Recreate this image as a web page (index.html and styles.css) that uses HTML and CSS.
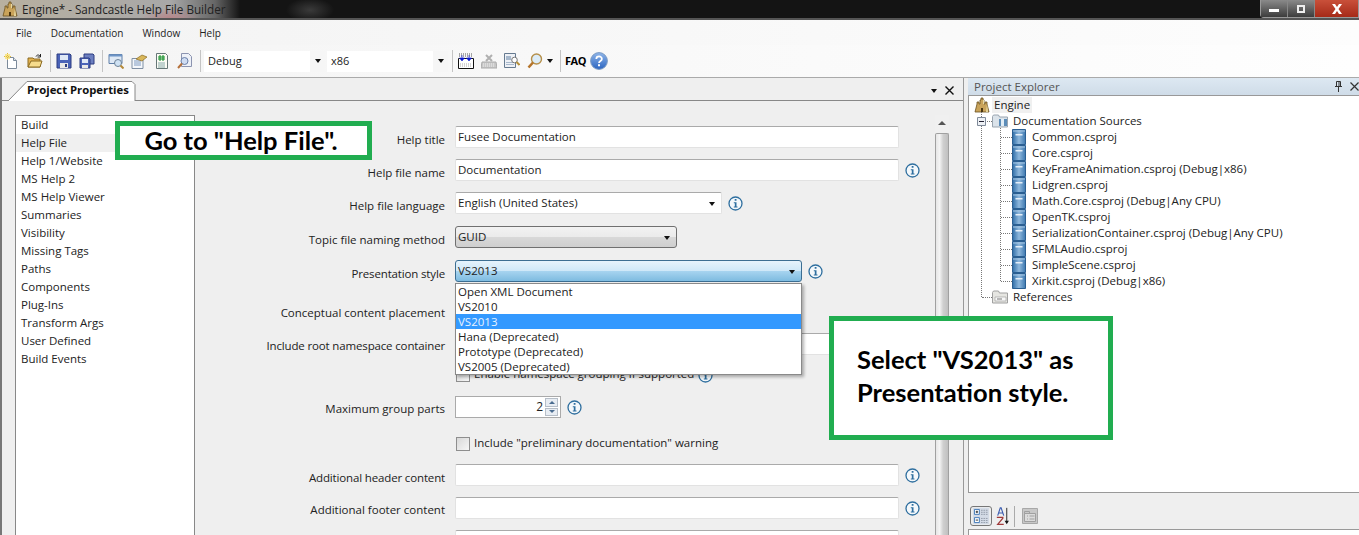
FILE: index.html
```html
<!DOCTYPE html>
<html lang="en">
<head>
    <meta charset="UTF-8">
    <title>Engine* - Sandcastle Help File Builder</title>
    <link rel="stylesheet" href="styles.css">
</head>
<body>
<svg class="sprite" xmlns="http://www.w3.org/2000/svg">
    <defs>
        <linearGradient id="blueSq" x1="0" x2="1" y1="0" y2="0"><stop offset="0" stop-color="#2f6ea8"/><stop offset=".5" stop-color="#8fb8dc"/><stop offset="1" stop-color="#3d78b0"/></linearGradient>
        <linearGradient id="helpBall" x1="0" x2="0" y1="0" y2="1"><stop offset="0" stop-color="#8fb6ea"/><stop offset="1" stop-color="#2a64c0"/></linearGradient>
    </defs>
    <symbol id="i-castle" viewBox="0 0 16 16"><path d="M1 15 3 7V5h2v2h1V3h1V1h2v2h1v4h1V5h2v2l2 8z" fill="#c9a35a" stroke="#6b5220" stroke-width=".8"/><path d="M7 15v-4h2v4z" fill="#4a3510"/><path d="M9 3h1v4H9zM13 7l1 8h-2z" fill="#e9d9a0"/></symbol>
    <symbol id="i-new" viewBox="0 0 16 16"><path d="M3.5 4.5h6l3 3v8h-9z" fill="#fff" stroke="#7c8a9a"/><path d="M9.5 4.5v3h3" fill="#dfe6ee" stroke="#7c8a9a"/><path d="M1 1h5v5H1z" fill="#f6e27a" opacity=".85"/><path d="M3.5 0v7M0 3.5h7" stroke="#e3b93a" stroke-dasharray="1 1"/></symbol>
    <symbol id="i-open" viewBox="0 0 16 16"><path d="M1 14V5h5l1 1h6v8z" fill="#e4b24e" stroke="#8a6a22"/><path d="M1 14l3-6h11l-2 6z" fill="#f7dc8c" stroke="#8a6a22"/><path d="M9 3.5c1-2 3-2 4.500 0M13.500 1v3h-3" fill="none" stroke="#222"/></symbol>
    <symbol id="i-save" viewBox="0 0 16 16"><path d="M1 1h13l1 1v13H1z" fill="#4a63b8" stroke="#2c3d80"/><path d="M4 2h8v5H4z" fill="#dfe8f6"/><path d="M4 10h8v5H4z" fill="#e8e8e8"/><path d="M9 11h2v3H9z" fill="#2c3d80"/></symbol>
    <symbol id="i-saveall" viewBox="0 0 16 16"><path d="M5 1h9l1 1v9H5z" fill="#6c7fc0" stroke="#2c3d80"/><path d="M1 5h9l1 1v9H1z" fill="#4a63b8" stroke="#2c3d80"/><path d="M3 6h6v4H3z" fill="#dfe8f6"/><path d="M3 12h6v3H3z" fill="#e8e8e8"/></symbol>
    <symbol id="i-window" viewBox="0 0 16 16"><path d="M1 1.500h13v9H1z" fill="#dfe9f5" stroke="#5f7fa8"/><path d="M1 1.500h13v2H1z" fill="#6d94c6"/><circle cx="10" cy="10" r="3.500" fill="#cfe2f4" stroke="#6d8297"/><path d="M12.500 12.500l3 3" stroke="#b58a3a" stroke-width="2"/></symbol>
    <symbol id="i-package" viewBox="0 0 16 16"><path d="M1 5.500h11v10H1z" fill="#f4f7fb" stroke="#7f8fa3"/><path d="M3 8h7M3 10h7M3 12h7" stroke="#7f9ac0"/><path d="M5 6l6-4 5 2-5 4z" fill="#d9b75a" stroke="#8a6a22" stroke-width=".7"/></symbol>
    <symbol id="i-sharp" viewBox="0 0 16 16"><path d="M2.500 .5h9l2 2v13h-11z" fill="#fbfbf4" stroke="#677"/><path d="M4 10h7M4 12h7M4 14h7" stroke="#8aa"/><path d="M6 2v6M9 2v6M4 4h7M4 6h7" stroke="#0a8a20"/></symbol>
    <symbol id="i-docfind" viewBox="0 0 16 16"><path d="M4.500 .5h7l3 3v10h-10z" fill="#eef1f8" stroke="#8c94b0"/><circle cx="7.500" cy="8" r="3.500" fill="#cfdcf2" stroke="#6a7fa8"/><path d="M5 10.500L1 15" stroke="#b5703a" stroke-width="2"/></symbol>
    <symbol id="i-toc" viewBox="0 0 16 16"><path d="M.5 5.500h15v10H.5z" fill="#fff" stroke="#111"/><path d="M1 1h14M1 3h14" stroke="#555" stroke-dasharray="1 1"/><path d="M4 2v5M1.500 5l2.500 3 2.500-3zM11 2v5M8.500 5l2.500 3 2.500-3z" fill="#0a1ad0" stroke="#0a1ad0" stroke-width=".6"/><path d="M2 11h12M2 13h12" stroke="#aaa" stroke-dasharray="1 1"/></symbol>
    <symbol id="i-keys" viewBox="0 0 16 16"><path d="M1 9h14l1 6H0z" fill="#c8c8c8" stroke="#aaa"/><path d="M2 11h12M2 13h12" stroke="#eee" stroke-dasharray="1 1"/><path d="M5 2l6 6M11 2L5 8" stroke="#b0b0b0" stroke-width="2"/></symbol>
    <symbol id="i-pagefind" viewBox="0 0 16 16"><path d="M.5 .5h11v14H.5z" fill="#eef1f6" stroke="#667a90"/><path d="M2 3h5v4H2zM2 9h8v1H2zM2 11h8v1H2z" fill="#a7b8cc"/><circle cx="10.500" cy="7" r="2.800" fill="#fff" stroke="#777"/><path d="M12.500 9l3 3" stroke="#b5903a" stroke-width="2"/></symbol>
    <symbol id="i-lens" viewBox="0 0 16 16"><circle cx="9.500" cy="6" r="5" fill="#dcecf8" stroke="#b58f4a" stroke-width="1.400"/><path d="M6 9.500L1.500 14.500" stroke="#b5742a" stroke-width="2.600"/></symbol>
    <symbol id="i-help" viewBox="0 0 18 18"><circle cx="9" cy="9" r="8.400" fill="url(#helpBall)" stroke="#7d9cc4"/><path d="M6.300 7c0-3.400 5.600-3.400 5.600 0 0 2-2.900 2-2.900 4" fill="none" stroke="#fff" stroke-width="1.700"/><path d="M8 12.300h2v2H8z" fill="#fff"/></symbol>
    <symbol id="i-info" viewBox="0 0 15 15"><circle cx="7.500" cy="7.500" r="6.500" fill="#f4f8fb" stroke="#2f6f9f" stroke-width="1.300"/><path d="M6.700 3h1.800v1.800H6.700zM5.800 6.200h2.700v4.300h1v1H5.800v-1h1V7.200h-1z" fill="#2f6f9f"/></symbol>
    <symbol id="i-proj" viewBox="0 0 14 16"><path d="M.5 .5h13v15H.5z" fill="url(#blueSq)" stroke="#2a5f92"/><path d="M1 2h12" stroke="#a8c8e4"/><path d="M3.500 5h7v1.500h-7z" fill="#e4eef8"/></symbol>
    <symbol id="i-folder" viewBox="0 0 16 14"><path d="M.5 13V2.500l1-1.500h5l1 2h8v10z" fill="#dbe3ea" stroke="#9aa5b0"/><path d="M7 5h8v7H7z" fill="#5b8cb8"/><path d="M9 5h3v7H9z" fill="#e0ecf5"/></symbol>
    <symbol id="i-refs" viewBox="0 0 16 14"><path d="M.5 13V2.500l1-1.500h5l1 2h8v10z" fill="#e6e6e2" stroke="#a0a0a0"/><path d="M3 7h11v4H3z" fill="#f8f8f8" stroke="#999" stroke-width=".6"/><path d="M5 9h5" stroke="#777"/></symbol>
    <symbol id="i-cat" viewBox="0 0 22 22"><path d="M1 1h20v20H1z" fill="#d4dbe6"/><path d="M3 3h6v6H3zM3 13h6v6H3z" fill="#fff" stroke="#2a6ab0"/><path d="M4.500 6h3M6 4.500v3M4.500 16h3" stroke="#111"/><path d="M11 4h8M11 6.500h8M11 9h8M11 14h8M11 16.500h8M11 19h8" stroke="#8a93a0" stroke-dasharray="2 1"/></symbol>
    <symbol id="i-az" viewBox="0 0 16 22"><path d="M3 10 6 1h1l3 9M4.500 7h4" fill="none" stroke="#3a5cb0" stroke-width="1.300"/><path d="M2 12h7v1l-6 7h7" fill="none" stroke="#a03a3a" stroke-width="1.400"/><path d="M13.500 1v17" stroke="#111"/><path d="M11 16h5l-2.500 4z" fill="#111"/></symbol>
    <symbol id="i-pages" viewBox="0 0 16 16"><path d="M.5 .5h15v15H.5z" fill="#c8c8c8" stroke="#a8a8a8"/><path d="M2.500 5.500h11v8h-11z" fill="#dcdcdc" stroke="#a0a0a0"/><path d="M2.500 3.500h5v2h-5zM5 8h1M7.500 8h5M5 11h1M7.500 11h5" fill="none" stroke="#a0a0a0"/></symbol>
    <symbol id="i-plusbox" viewBox="0 0 9 9"><path d="M.5 .5h8v8h-8z" fill="#eef1f5" stroke="#7f8a99"/><path d="M2 4.500h5" stroke="#223"/></symbol>
</svg>

<div class="app">
    <!-- window title -->
    <header class="titlebar">
        <svg class="title-icon"><use href="#i-castle"/></svg>
        <span class="title-text">Engine* - Sandcastle Help File Builder</span>
        <div class="win-buttons">
            <span class="win-btn"><i class="glyph-min"></i></span>
            <span class="win-btn"><i class="glyph-max"></i></span>
            <span class="win-btn win-close">
                <svg class="glyph-close" viewBox="0 0 12 10"><path d="M1 0h3l2 3 2-3h3L7.500 5 11 10H8L6 7l-2 3H1l3.500-5z" fill="#fff"/></svg>
            </span>
        </div>
    </header>

    <nav class="menubar">
        <span>File</span>
        <span>Documentation</span>
        <span>Window</span>
        <span>Help</span>
    </nav>

    <div class="toolbar">
        <div class="tool-group">
            <svg class="ico"><use href="#i-new"/></svg>
            <svg class="ico"><use href="#i-open"/></svg>
        </div>
        <div class="tool-group">
            <svg class="ico"><use href="#i-save"/></svg>
            <svg class="ico"><use href="#i-saveall"/></svg>
        </div>
        <div class="tool-group">
            <svg class="ico"><use href="#i-window"/></svg>
            <svg class="ico"><use href="#i-package"/></svg>
            <svg class="ico"><use href="#i-sharp"/></svg>
            <svg class="ico"><use href="#i-docfind"/></svg>
        </div>
        <div class="tool-group combos">
            <div class="combo"><span>Debug</span><i class="caret"></i></div>
            <div class="combo"><span>x86</span><i class="caret"></i></div>
        </div>
        <div class="tool-group">
            <svg class="ico"><use href="#i-toc"/></svg>
            <svg class="ico"><use href="#i-keys"/></svg>
            <svg class="ico"><use href="#i-pagefind"/></svg>
            <svg class="ico"><use href="#i-lens"/></svg>
            <i class="caret caret-tool"></i>
        </div>
        <div class="tool-group last">
            <span class="faq">FAQ</span>
            <svg class="ico-help"><use href="#i-help"/></svg>
        </div>
    </div>

    <main class="workspace">
        <!-- document pane -->
        <section class="doc">
            <div class="tabstrip">
                <div class="tab">
                    <svg class="tab-shape" viewBox="0 0 128 20" preserveAspectRatio="none"><path d="M0 20 19 .5h105l3 3V20" fill="#fff" stroke="#888"/></svg>
                    <span class="tab-label">Project Properties</span>
                </div>
                <div class="doc-actions">
                    <i class="caret"></i>
                    <svg class="x-btn" viewBox="0 0 9 9"><path d="M.5 .5l8 8M8.500 .5l-8 8" stroke="#111" stroke-width="1.400"/></svg>
                </div>
            </div>
            <div class="doc-body">
                <ul class="categories">
                    <li>Build</li>
                    <li class="current">Help File</li>
                    <li>Help 1/Website</li>
                    <li>MS Help 2</li>
                    <li>MS Help Viewer</li>
                    <li>Summaries</li>
                    <li>Visibility</li>
                    <li>Missing Tags</li>
                    <li>Paths</li>
                    <li>Components</li>
                    <li>Plug-Ins</li>
                    <li>Transform Args</li>
                    <li>User Defined</li>
                    <li>Build Events</li>
                </ul>

                <form class="props">
                    <div class="row">
                        <label>Help title</label>
                        <div class="field w-wide">Fusee Documentation</div>
                    </div>
                    <div class="row">
                        <label>Help file name</label>
                        <div class="field w-wide">Documentation</div>
                        <svg class="info"><use href="#i-info"/></svg>
                    </div>
                    <div class="row">
                        <label>Help file language</label>
                        <div class="field w-lang">English (United States)<i class="caret"></i></div>
                        <svg class="info"><use href="#i-info"/></svg>
                    </div>
                    <div class="row">
                        <label>Topic file naming method</label>
                        <div class="field select w-topic">GUID<i class="caret"></i></div>
                    </div>
                    <div class="row">
                        <label class="narrow">Presentation style</label>
                        <div class="field select open w-style">VS2013<i class="caret"></i>
                            <ul class="dropdown">
                                <li>Open XML Document</li>
                                <li>VS2010</li>
                                <li class="selected">VS2013</li>
                                <li>Hana (Deprecated)</li>
                                <li>Prototype (Deprecated)</li>
                                <li>VS2005 (Deprecated)</li>
                            </ul>
                        </div>
                        <svg class="info"><use href="#i-info"/></svg>
                    </div>
                    <div class="row">
                        <label>Conceptual content placement</label>
                    </div>
                    <div class="row">
                        <label class="tight narrow">Include root namespace container</label>
                        <div class="field w-wide"></div>
                    </div>
                    <div class="row">
                        <span class="spacer"></span>
                        <span class="check"></span>
                        <span class="check-label">Enable namespace grouping if supported</span>
                        <svg class="info"><use href="#i-info"/></svg>
                    </div>
                    <div class="row">
                        <label class="tight">Maximum group parts</label>
                        <div class="field number w-num">2
                            <span class="spin"><i class="spin-up"></i><i class="spin-down"></i></span>
                        </div>
                        <svg class="info"><use href="#i-info"/></svg>
                    </div>
                    <div class="row">
                        <span class="spacer"></span>
                        <span class="check"></span>
                        <span class="check-label">Include "preliminary documentation" warning</span>
                    </div>
                    <div class="row">
                        <label class="narrow">Additional header content</label>
                        <div class="field w-wide"></div>
                        <svg class="info"><use href="#i-info"/></svg>
                    </div>
                    <div class="row">
                        <label class="tight">Additional footer content</label>
                        <div class="field w-wide"></div>
                        <svg class="info"><use href="#i-info"/></svg>
                    </div>
                    <div class="row">
                        <span class="spacer"></span>
                        <div class="field w-wide"></div>
                    </div>
                </form>

                <div class="scrollbar">
                    <span class="scroll-up"></span>
                    <span class="scroll-thumb"></span>
                </div>
            </div>
        </section>

        <!-- project explorer -->
        <aside class="explorer">
            <div class="explorer-head">
                <span>Project Explorer</span>
                <svg class="pin" viewBox="0 0 9 11"><path d="M2.500 .5h4v5h-4zM1 5.500h7M4.500 6v5M5 1v4" fill="none" stroke="#333"/></svg>
                <svg class="x-btn" viewBox="0 0 9 9"><path d="M.5 .5l8 8M8.500 .5l-8 8" stroke="#333" stroke-width="1.200"/></svg>
            </div>
            <div class="tree">
                <div class="node root"><svg class="ico"><use href="#i-castle"/></svg><span>Engine</span></div>
                <ul class="level1">
                    <li>
                        <svg class="expander"><use href="#i-plusbox"/></svg>
                        <div class="node"><svg class="ico-folder"><use href="#i-folder"/></svg><span>Documentation Sources</span></div>
                        <ul class="level2">
                            <li><svg class="ico-proj"><use href="#i-proj"/></svg><span>Common.csproj</span></li>
                            <li><svg class="ico-proj"><use href="#i-proj"/></svg><span>Core.csproj</span></li>
                            <li><svg class="ico-proj"><use href="#i-proj"/></svg><span>KeyFrameAnimation.csproj (Debug|x86)</span></li>
                            <li><svg class="ico-proj"><use href="#i-proj"/></svg><span>Lidgren.csproj</span></li>
                            <li><svg class="ico-proj"><use href="#i-proj"/></svg><span>Math.Core.csproj (Debug|Any CPU)</span></li>
                            <li><svg class="ico-proj"><use href="#i-proj"/></svg><span>OpenTK.csproj</span></li>
                            <li><svg class="ico-proj"><use href="#i-proj"/></svg><span>SerializationContainer.csproj (Debug|Any CPU)</span></li>
                            <li><svg class="ico-proj"><use href="#i-proj"/></svg><span>SFMLAudio.csproj</span></li>
                            <li><svg class="ico-proj"><use href="#i-proj"/></svg><span>SimpleScene.csproj</span></li>
                            <li><svg class="ico-proj"><use href="#i-proj"/></svg><span>Xirkit.csproj (Debug|x86)</span></li>
                        </ul>
                    </li>
                    <li class="refs">
                        <div class="node"><svg class="ico-folder"><use href="#i-refs"/></svg><span>References</span></div>
                    </li>
                </ul>
            </div>
            <div class="prop-tools">
                <span class="cat-btn"><svg class="ico-cat"><use href="#i-cat"/></svg></span>
                <svg class="ico-az"><use href="#i-az"/></svg>
                <span class="prop-sep"></span>
                <svg class="ico"><use href="#i-pages"/></svg>
            </div>
            <div class="prop-grid"></div>
        </aside>
    </main>

    <!-- annotations painted over the screenshot -->
    <div class="callout callout-help">Go to "Help File".</div>
    <div class="callout callout-style">Select "VS2013" as<br>Presentation style.</div>
</div>
</body>
</html>
```

FILE: styles.css
```css
/* General */
html, body {
    margin: 0;
    padding: 0;
    height: 535px;
    overflow: hidden;
}

body {
    font-family: "Open Sans", sans-serif;
    font-size: 11.5px;
    line-height: 16px;
    color: #222;
    background: #efefef;
}

ul {
    list-style: none;
    margin: 0;
    padding: 0;
}

.sprite {
    position: absolute;
    width: 0;
    height: 0;
}

.app {
    position: relative;
    width: 1359px;
    height: 535px;
    overflow: hidden;
}

.ico {
    width: 16px;
    height: 16px;
    flex: none;
}

/* Title bar */
.titlebar {
    height: 18px;
    display: flex;
    align-items: center;
    border-bottom: 2px solid #555;
    background:
        radial-gradient(ellipse 24px 12px at 310px 10px, #3a3a3a, transparent),
        radial-gradient(ellipse 30px 10px at 170px 18px, #b8868a, transparent),
        linear-gradient(to right, #b8b0a0 0, #a8a8a8 170px, #666 215px, #141414 240px);
}

.title-icon {
    width: 16px;
    height: 16px;
    margin-left: 2px;
}

.title-text {
    margin-left: 4px;
    font-size: 11.7px;
    color: #222;
}

.win-buttons {
    margin-left: auto;
    display: flex;
    align-self: flex-start;
    height: 17px;
    background: #555;
    border: 1px solid #999;
    border-top: 0;
    border-radius: 0 0 0 4px;
}

.win-btn {
    width: 26px;
    display: flex;
    align-items: center;
    justify-content: center;
    border-right: 1px solid #888;
    background: linear-gradient(#8a8a8a, #3c3c3c);
}

.win-close {
    width: 43px;
    border-right: 0;
    background: linear-gradient(#c9503a, #a52a18);
}

.glyph-min {
    width: 10px;
    height: 3px;
    margin-top: 4px;
    background: #fff;
}

.glyph-max {
    width: 8px;
    height: 8px;
    border: 2px solid #eee;
    box-sizing: border-box;
}

.glyph-close {
    width: 12px;
    height: 10px;
}

/* Menu */
.menubar {
    height: 25px;
    display: flex;
    align-items: center;
    padding-left: 16px;
    gap: 19px;
    font-size: 10px;
    background: linear-gradient(to right, #f3f3f3, #fdfdfd);
}

/* Toolbar */
.toolbar {
    height: 33px;
    display: flex;
    align-items: center;
    box-sizing: border-box;
    border-bottom: 1px solid #aaa;
    background: linear-gradient(to right, #f4f4f4, #fefefe);
}

.tool-group {
    display: flex;
    align-items: center;
    gap: 7px;
    height: 22px;
    padding: 0 7px 0 5px;
    border-right: 1px solid #c4c4c4;
}

.tool-group:first-child {
    padding-left: 4px;
}

.combos {
    gap: 2px;
    padding: 0 4px 0 3px;
}

.tool-group.last {
    border: 0;
    padding-left: 4px;
    gap: 5px;
}

.combo {
    width: 121px;
    height: 21px;
    display: flex;
    align-items: center;
    padding-left: 4px;
    box-sizing: border-box;
    background: linear-gradient(to right, #fff 88%, #f6f6f6 88%);
    font-size: 11px;
}

.caret {
    width: 0;
    height: 0;
    border: 3.5px solid transparent;
    border-top: 4px solid #111;
    border-bottom: 0;
    flex: none;
}

.combo .caret {
    margin-left: auto;
    margin-right: 4px;
}

.caret-tool {
    margin-left: -3px;
}

.faq {
    width: 20px;
    font-size: 11px;
    font-weight: 700;
    letter-spacing: -0.5px;
    color: #000;
}

.ico-help {
    width: 18px;
    height: 18px;
}

/* Workspace */
.workspace {
    height: 457px;
    display: flex;
}

.doc {
    width: 961px;
    flex: none;
    border-left: 2px solid #777;
    border-right: 1px solid #999;
    margin-right: 4px;
    display: flex;
    flex-direction: column;
}

.tabstrip {
    height: 22px;
    display: flex;
    align-items: flex-end;
    border-bottom: 1px solid #888;
    padding-left: 6px;
}

.tab {
    position: relative;
    width: 128px;
    height: 20px;
    margin-bottom: -1px;
}

.tab-shape {
    position: absolute;
    inset: 0;
    width: 100%;
    height: 100%;
}

.tab-label {
    position: relative;
    display: block;
    padding-left: 19px;
    font-weight: 700;
    font-size: 11.3px;
    line-height: 18px;
    color: #111;
    white-space: nowrap;
}

.doc-actions {
    margin-left: auto;
    display: flex;
    align-items: center;
    gap: 8px;
    align-self: center;
    margin-top: 3px;
    padding-right: 9px;
}

.x-btn {
    width: 9px;
    height: 9px;
}

.doc-body {
    flex: 1;
    display: flex;
    padding: 14px 13px 0 13px;
    min-height: 0;
}

/* Left list */
.categories {
    width: 178px;
    flex: none;
    height: 500px;
    background: #fff;
    border: 1px solid #888;
}

.categories li {
    height: 18px;
    line-height: 18px;
    padding-left: 5px;
}

.categories li.current {
    background: #f0f0f0;
}

/* Property form */
.props {
    width: 741px;
    flex: none;
    margin-top: 11px;
    display: grid;
    grid-template-rows: 33px 33px 34px 34px 39px 34px 35px 28px 41px 27px 33px 33px 33px;
}

.row {
    display: flex;
    align-items: flex-start;
}

.row label {
    width: 250px;
    margin-top: 6px;
    margin-right: 10px;
    text-align: right;
    flex: none;
}

.row label.tight {
    margin-top: 5px;
}

.row label.narrow {
    letter-spacing: -0.15px;
}

.spacer {
    width: 260px;
    flex: none;
}

.field {
    position: relative;
    height: 22px;
    line-height: 20px;
    box-sizing: border-box;
    padding-left: 2px;
    background: #fff;
    border: 1px solid #e2e2e2;
    border-top-color: #aaa;
    border-radius: 2px;
    display: flex;
    align-items: center;
    flex: none;
}

.field .caret {
    position: absolute;
    right: 6px;
    top: 9px;
}

.w-wide { width: 444px; }
.w-lang { width: 267px; }
.w-topic { width: 222px; }
.w-style { width: 347px; }
.w-num { width: 106px; }

.select {
    border: 1px solid #707070;
    border-radius: 3px;
    background: linear-gradient(#f2f2f2 0, #ebebeb 48%, #d8d8d8 52%, #cfcfcf 100%);
}

.select.open {
    border-color: #3c6e92;
    background: linear-gradient(#e6f3fc 0, #cfe8f8 48%, #a6d3ef 52%, #7ebbe0 100%);
}

.info {
    width: 15px;
    height: 15px;
    margin-left: 6px;
    margin-top: 4px;
    flex: none;
}

/* Open list of the presentation style box */
.dropdown {
    position: absolute;
    left: -1px;
    top: 22px;
    width: 347px;
    box-sizing: border-box;
    background: #fff;
    border: 1px solid #8a8a8a;
    box-shadow: 2px 2px 3px rgba(0, 0, 0, 0.3);
    z-index: 2;
}

.dropdown li {
    height: 15px;
    line-height: 15px;
    padding-left: 2px;
}

.dropdown li.selected {
    background: #3399ff;
    color: #e8f2ff;
}

.number {
    justify-content: flex-end;
    padding-right: 17px;
    border-color: #aaa;
    border-radius: 0;
    font-size: 12px;
}

.spin {
    position: absolute;
    right: 2px;
    top: 1px;
    width: 13px;
    height: 18px;
    display: flex;
    flex-direction: column;
    gap: 1px;
}

.spin i {
    flex: 1;
    display: flex;
    align-items: center;
    justify-content: center;
    border: 1px solid #b6bec8;
    background: #e8edf3;
}

.spin i::after {
    content: "";
    border: 3px solid transparent;
}

.spin i.spin-up::after {
    border-bottom-color: #4a6c90;
    border-top: 0;
}

.spin i.spin-down::after {
    border-top-color: #4a6c90;
    border-bottom: 0;
}

.check {
    width: 12px;
    height: 12px;
    margin-left: 1px;
    border: 1px solid #8e8e8e;
    background: linear-gradient(135deg, #d8d8d8, #f6f6f6);
    flex: none;
}

.check-label {
    margin-left: 4px;
    margin-top: -2px;
}

.check + .check-label + .info {
    margin-top: 0;
    margin-left: 4px;
}

/* Form scrollbar */
.scrollbar {
    width: 14px;
    margin-left: -1px;
    flex: none;
    display: flex;
    flex-direction: column;
    align-items: stretch;
    background: #f0f0f0;
}

.scroll-up {
    height: 18px;
    position: relative;
}

.scroll-up::after {
    content: "";
    position: absolute;
    left: 3px;
    top: 6px;
    border: 4px solid transparent;
    border-bottom: 4px solid #555;
    border-top: 0;
}

.scroll-thumb {
    flex: 1;
    border: 1px solid #a0a0a0;
    border-bottom: 0;
    border-radius: 2px 2px 0 0;
    background: linear-gradient(to right, #e6e6e6, #f4f4f4 30%, #cfcfcf 60%, #c0c0c0);
}

/* Project explorer */
.explorer {
    flex: 1;
    display: flex;
    flex-direction: column;
    min-width: 0;
}

.explorer-head {
    height: 18px;
    display: flex;
    align-items: center;
    gap: 7px;
    padding-left: 6px;
    color: #555;
    background: linear-gradient(#dde8f2, #cfdce8);
    border-bottom: 1px solid #999;
    box-sizing: border-box;
}

.explorer-head span {
    margin-right: auto;
}

.pin {
    width: 9px;
    height: 11px;
}

.tree {
    height: 397px;
    box-sizing: border-box;
    padding: 1px 0 0 5px;
    background: #fff;
    border-left: 1px solid #999;
    border-bottom: 1px solid #999;
}

.node {
    height: 16px;
    display: flex;
    align-items: center;
}

.root span {
    margin-left: 2px;
    padding: 0 2px;
    background: #f0f0f0;
}

.level1 {
    position: relative;
    margin-left: 7px;
}

.level1::before {
    content: "";
    position: absolute;
    left: 0;
    top: -1px;
    bottom: 8px;
    border-left: 1px dotted #777;
}

.level1 > li {
    position: relative;
    padding-left: 11px;
}

.level1 > li::before {
    content: "";
    position: absolute;
    left: 1px;
    top: 8px;
    width: 10px;
    border-top: 1px dotted #777;
}

.expander {
    position: absolute;
    left: -4px;
    top: 4px;
    width: 9px;
    height: 9px;
}

.ico-folder {
    width: 16px;
    height: 14px;
    margin-right: 5px;
    flex: none;
}

.level2 {
    position: relative;
    margin-left: 8px;
}

.level2::before {
    content: "";
    position: absolute;
    left: 0;
    top: -1px;
    bottom: 8px;
    border-left: 1px dotted #777;
}

.level2 li {
    position: relative;
    height: 16px;
    display: flex;
    align-items: center;
    padding-left: 12px;
    white-space: nowrap;
}

.level2 li::before {
    content: "";
    position: absolute;
    left: 1px;
    top: 8px;
    width: 11px;
    border-top: 1px dotted #777;
}

.ico-proj {
    width: 14px;
    height: 16px;
    margin-right: 6px;
    flex: none;
}

.prop-tools {
    height: 36px;
    display: flex;
    align-items: center;
    padding-left: 2px;
    box-sizing: border-box;
    padding-top: 10px;
}

.cat-btn {
    width: 22px;
    height: 20px;
    display: flex;
    border: 1px solid #777;
    border-radius: 3px;
    box-sizing: border-box;
    overflow: hidden;
}

.ico-cat {
    width: 20px;
    height: 18px;
}

.ico-az {
    width: 14px;
    height: 19px;
    margin-left: 3px;
}

.prop-sep {
    width: 1px;
    height: 21px;
    margin: 0 7px 0 5px;
    background: #aaa;
}

.prop-grid {
    flex: 1;
    background: #fff;
    border-top: 1px solid #999;
    border-left: 1px solid #999;
}

/* Green annotation boxes */
.callout {
    position: absolute;
    box-sizing: border-box;
    background: #fff;
    border: 5px solid #21ad50;
    color: #000;
    font-family: "Lato", sans-serif;
    font-weight: 700;
    font-size: 25.5px;
    z-index: 5;
}

.callout-help {
    left: 115px;
    top: 121px;
    width: 257px;
    height: 39px;
    line-height: 28px;
    text-align: center;
    padding-right: 5px;
}

.callout-style {
    left: 829px;
    top: 316px;
    width: 284px;
    height: 124px;
    line-height: 33px;
    padding: 22px 0 0 23px;
}
```
